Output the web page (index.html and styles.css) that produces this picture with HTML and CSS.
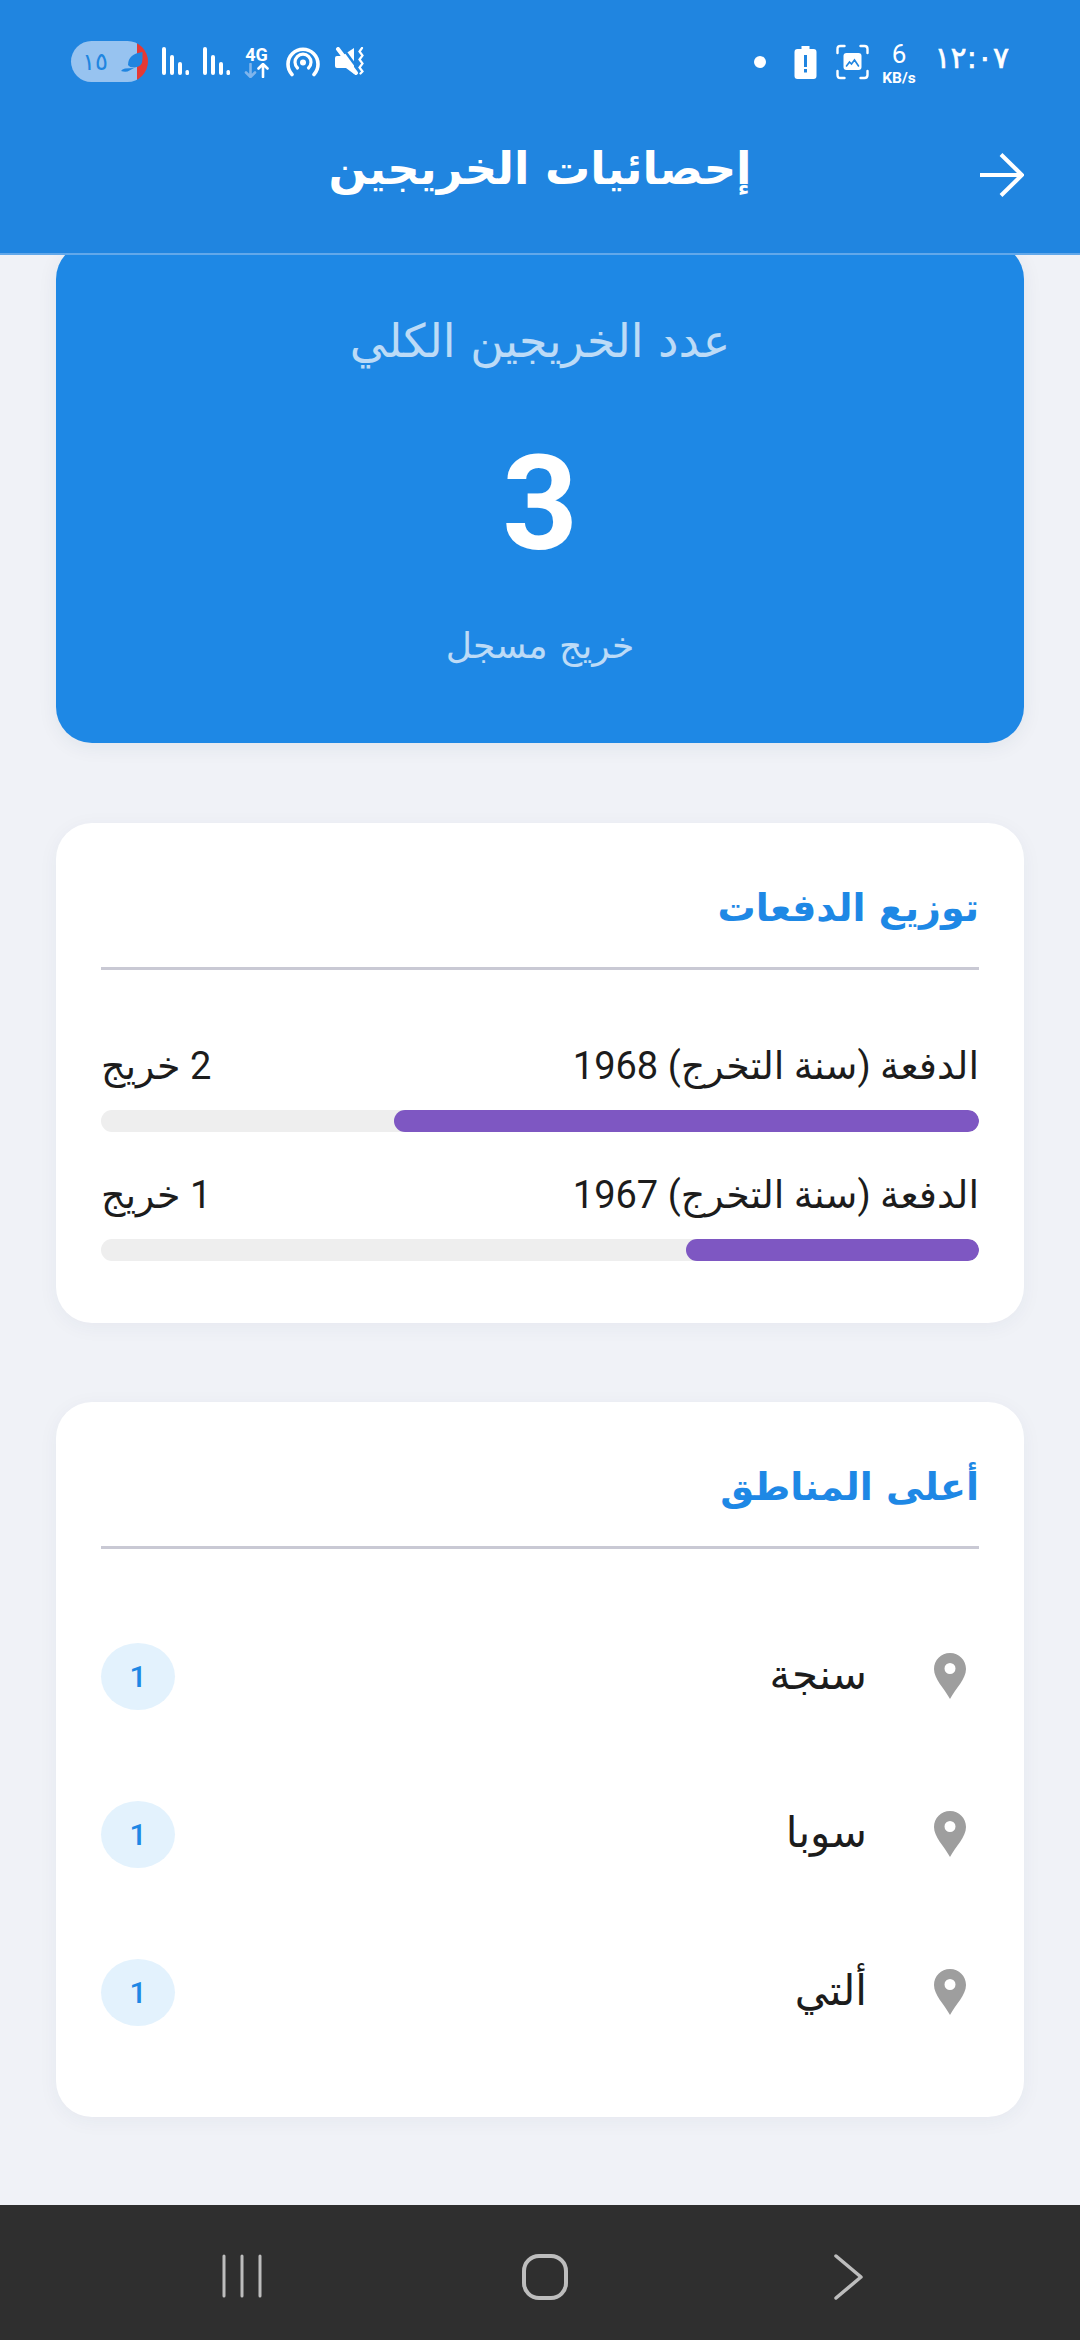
FILE: index.html
```html
<!DOCTYPE html>
<html lang="ar" dir="rtl">
<head>
    <meta charset="UTF-8">
    <meta name="viewport" content="width=device-width, initial-scale=1.0">
    <title>إحصائيات الخريجين</title>
    <link rel="stylesheet" href="styles.css">
</head>
<body>
    <header class="top">
        <div class="status">
            <div class="status-group status-right">
                <span class="clock">١٢:٠٧</span>
                <span class="speed"><b>6</b><i>KB/s</i></span>
                <svg class="ic-shot" viewBox="0 0 34 36" fill="none" stroke="#fff" stroke-width="2.4" stroke-linecap="round">
                    <path d="M2 9V5q0-3 3-3h4M25 2h4q3 0 3 3v4M32 27v4q0 3-3 3h-4M9 34H5q-3 0-3-3v-4"/>
                    <rect x="8" y="9" width="18" height="17" rx="3" fill="#fff" stroke="none"/>
                    <path d="M11 22l3-4 2 2 3-4 4 6" stroke="#2085e0" stroke-width="1.6"/>
                </svg>
                <svg class="ic-batt" viewBox="0 0 22 33">
                    <path fill="#fff" fill-rule="evenodd" d="M7 0h8v3h4q3 0 3 3v24q0 3-3 3H3q-3 0-3-3V6q0-3 3-3h4zM9.500 9v12h3V9zM9.500 23v3.500h3V23z"/>
                </svg>
                <span class="dot"></span>
            </div>
            <div class="status-group status-left">
                <svg class="ic-mute" viewBox="0 0 29 28" fill="none">
                    <path fill="#fff" d="M0 11q0-2 2-2h5L19 1v26l-8-6H2q-2 0-2-2z"/>
                    <path stroke="#2085e0" stroke-width="2.500" d="M7 0l19 26"/>
                    <path stroke="#fff" stroke-width="4" stroke-linecap="round" d="M3 2l18 24"/>
                    <path stroke="#fff" stroke-width="2.200" stroke-linecap="round" d="M27 1l-2.500 3.500 3 4-3 4 3 4-3 4 3 4-2 2"/>
                </svg>
                <svg class="ic-hot" viewBox="0 0 34 30" fill="none" stroke="#fff" stroke-linecap="round">
                    <path stroke-width="3.600" d="M6 27.500a15 15 0 1 1 22 0"/>
                    <path stroke-width="3.200" d="M11.500 21a8 8 0 1 1 11 0"/>
                    <circle cx="17" cy="15.500" r="3" fill="#fff" stroke="none"/>
                </svg>
                <span class="net">
                    <b>4G</b>
                    <svg viewBox="0 0 25 15" fill="none" stroke-width="2.600" stroke-linecap="round">
                        <path stroke="#7fb5ec" d="M6.500 1v13M2 9.500L6.500 14 11 9.500"/>
                        <path stroke="#fff" d="M19 14V1M14.500 5.500L19 1l4.500 4.500"/>
                    </svg>
                </span>
                <svg class="ic-bars" viewBox="0 0 27 28" fill="#fff">
                    <rect x="0" y="0" width="4" height="28" rx="2"/>
                    <rect x="8" y="8" width="4" height="20" rx="2"/>
                    <rect x="16" y="15" width="4" height="13" rx="2"/>
                    <rect x="23.500" y="23" width="3.500" height="5" rx="1.500"/>
                </svg>
                <svg class="ic-bars" viewBox="0 0 27 28" fill="#fff">
                    <rect x="0" y="0" width="4" height="28" rx="2"/>
                    <rect x="8" y="8" width="4" height="20" rx="2"/>
                    <rect x="16" y="15" width="4" height="13" rx="2"/>
                    <rect x="23.500" y="23" width="3.500" height="5" rx="1.500"/>
                </svg>
                <span class="pill">
                    <svg viewBox="0 0 22 20" fill="#2085e0"><path d="M21.500 0v7q0 8-8 8.500-5 0-6.500-2.500Q7 2 21.500 0zM0 19q1-2 4-2.500 4-.5 9-.5-4 2-6.500 3.500Q3 20 0 19z"/></svg>
                    <span>١٥</span>
                </span>
            </div>
        </div>
        <div class="appbar">
            <h1>إحصائيات الخريجين</h1>
            <svg class="back" viewBox="0 0 44 44" fill="none" stroke="#fff" stroke-width="4">
                <path d="M0 22h42M21 1.500L42 22 21 42.500"/>
            </svg>
        </div>
    </header>

    <main class="page">
        <section class="hero">
            <p class="hero-title">عدد الخريجين الكلي</p>
            <p class="hero-num">3</p>
            <p class="hero-sub">خريج مسجل</p>
        </section>

        <section class="card">
            <h2>توزيع الدفعات</h2>
            <div class="batches">
                <div class="batch">
                    <div class="batch-label"><span>الدفعة (سنة التخرج) 1968</span><span>2 خريج</span></div>
                    <div class="track"><div class="fill" style="width: 66.67%"></div></div>
                </div>
                <div class="batch">
                    <div class="batch-label"><span>الدفعة (سنة التخرج) 1967</span><span>1 خريج</span></div>
                    <div class="track"><div class="fill" style="width: 33.33%"></div></div>
                </div>
            </div>
        </section>

        <section class="card">
            <h2>أعلى المناطق</h2>
            <ul class="areas">
                <li>
                    <svg class="pin" viewBox="0 0 32 46"><path fill="#9e9e9e" fill-rule="evenodd" d="M16 0C7 0 0 7 0 16c0 10 10 19 16 30 6-11 16-20 16-30C32 7 25 0 16 0zm0 10a5.500 5.500 0 1 1 0 11 5.500 5.500 0 0 1 0-11z"/></svg>
                    <span class="area-name">سنجة</span>
                    <span class="count">1</span>
                </li>
                <li>
                    <svg class="pin" viewBox="0 0 32 46"><path fill="#9e9e9e" fill-rule="evenodd" d="M16 0C7 0 0 7 0 16c0 10 10 19 16 30 6-11 16-20 16-30C32 7 25 0 16 0zm0 10a5.500 5.500 0 1 1 0 11 5.500 5.500 0 0 1 0-11z"/></svg>
                    <span class="area-name">سوبا</span>
                    <span class="count">1</span>
                </li>
                <li>
                    <svg class="pin" viewBox="0 0 32 46"><path fill="#9e9e9e" fill-rule="evenodd" d="M16 0C7 0 0 7 0 16c0 10 10 19 16 30 6-11 16-20 16-30C32 7 25 0 16 0zm0 10a5.500 5.500 0 1 1 0 11 5.500 5.500 0 0 1 0-11z"/></svg>
                    <span class="area-name">ألتي</span>
                    <span class="count">1</span>
                </li>
            </ul>
        </section>
    </main>

    <nav class="navbar">
        <svg class="nav-recent" viewBox="0 0 40 44" stroke="#bdbdbd" stroke-width="3" stroke-linecap="round"><path d="M2 2v40M20 2v40M38 2v40"/></svg>
        <svg class="nav-home" viewBox="0 0 46 46" fill="none" stroke="#bdbdbd" stroke-width="4"><rect x="2" y="2" width="42" height="42" rx="15"/></svg>
        <svg class="nav-back" viewBox="0 0 30 46" fill="none" stroke="#bdbdbd" stroke-width="3.500" stroke-linecap="round" stroke-linejoin="round"><path d="M2 2l25 21L2 44"/></svg>
    </nav>
</body>
</html>
```

FILE: styles.css
```css
* {
    margin: 0;
    padding: 0;
    box-sizing: border-box;
}
body {
    width: 1080px;
    height: 2340px;
    display: flex;
    flex-direction: column;
    overflow: hidden;
    background-color: #f0f2f7;
    font-family: "DejaVu Sans", sans-serif;
    color: #1c1c1c;
}
svg {
    display: block;
    flex: none;
}

/* header */
.top {
    position: relative;
    z-index: 2;
    height: 255px;
    background-color: #2085e0;
    border-bottom: 2px solid #62a8ea;
}
.status {
    height: 84px;
    padding: 40px 71px 0 71px;
    display: flex;
    justify-content: space-between;
    align-items: flex-start;
}
.status-group {
    display: flex;
    align-items: flex-start;
}
.clock {
    width: 72px;
    margin-left: 19px;
    color: #fff;
    font-size: 30px;
    -webkit-text-stroke: .6px #fff;
    line-height: 36px;
    text-align: center;
}
.speed {
    width: 38px;
    margin-left: 10px;
    margin-top: 2px;
    display: flex;
    flex-direction: column;
    align-items: center;
    color: #fff;
    font-family: Roboto, sans-serif;
}
.speed b {
    font-weight: 400;
    font-size: 26px;
    line-height: 24px;
}
.speed i {
    margin-top: 3px;
    font-style: normal;
    font-weight: 700;
    font-size: 15.5px;
    line-height: 18px;
}
.ic-shot {
    width: 35px;
    height: 36px;
    margin: 4px 0 0 18px;
}
.ic-batt {
    width: 23px;
    height: 33px;
    margin: 6px 0 0 28px;
}
.dot {
    width: 12px;
    height: 12px;
    margin-top: 16px;
    border-radius: 50%;
    background-color: #fff;
}
.ic-mute {
    width: 29px;
    height: 28px;
    margin: 7px 0 0 15px;
}
.ic-hot {
    width: 34px;
    height: 30px;
    margin: 7px 0 0 17px;
}
.net {
    width: 25px;
    margin: 6px 0 0 14px;
    color: #fff;
    font-family: Roboto, sans-serif;
}
.net b {
    display: block;
    font-size: 18px;
    font-weight: 700;
    line-height: 17px;
    text-align: center;
}
.net svg {
    width: 25px;
    height: 15px;
}
.ic-bars {
    width: 27px;
    height: 28px;
    margin: 7px 0 0 14px;
}
.pill {
    width: 77px;
    height: 41px;
    margin-top: 1px;
    padding: 0 5px 0 0;
    border-radius: 21px;
    display: flex;
    align-items: center;
    gap: 13px;
    background: linear-gradient(to left, #e53935 11px, #97c3f0 11px);
    color: #2085e0;
    font-size: 24px;
}
.pill svg {
    width: 22px;
    height: 20px;
}
.appbar {
    height: 169px;
    padding: 0 72px;
    display: flex;
    align-items: center;
    position: relative;
}
.appbar h1 {
    flex: 1;
    text-align: center;
    color: #fff;
    font-size: 45px;
    font-weight: 700;
}
.back {
    position: absolute;
    right: 56px;
    top: 69px;
    width: 44px;
    height: 44px;
}

/* content */
.page {
    flex: 1;
    overflow: hidden;
    padding: 0 56px;
    display: flex;
    flex-direction: column;
    gap: 79px;
}
.hero {
    flex: none;
    height: 500px;
    margin-top: -12px;
    margin-bottom: 1px;
    padding-top: 63px;
    border-radius: 36px;
    background-color: #1e88e5;
    box-shadow: 0 4px 20px rgba(30, 50, 90, .07);
    color: #fff;
    text-align: center;
}
.hero-title {
    font-size: 46px;
    line-height: 70px;
    opacity: .7;
}
.hero-num {
    margin-top: 38px;
    font-family: Roboto, sans-serif;
    font-size: 132px;
    font-weight: 700;
    line-height: 180px;
}
.hero-sub {
    margin-top: 22px;
    font-size: 36px;
    line-height: 60px;
    opacity: .7;
}
.card {
    flex: none;
    padding: 45px 45px 62px;
    border-radius: 36px;
    background-color: #fff;
    box-shadow: 0 4px 20px rgba(30, 50, 90, .05);
}
.card h2 {
    height: 102px;
    padding-bottom: 19px;
    border-bottom: 3px solid #c9c9d4;
    color: #1e88e5;
    font-size: 38px;
    font-weight: 700;
    line-height: 80px;
}
.batches {
    margin-top: 71px;
    display: flex;
    flex-direction: column;
    gap: 38px;
}
.batch-label {
    display: flex;
    justify-content: space-between;
    margin-bottom: 19px;
    font-family: Roboto, "DejaVu Sans", sans-serif;
    font-size: 38px;
    line-height: 50px;
}
.track {
    height: 22px;
    border-radius: 11px;
    background-color: #eeeeee;
    overflow: hidden;
}
.fill {
    height: 100%;
    border-radius: 11px;
    background-color: #7e57c2;
}
.areas {
    margin-top: 48px;
    margin-bottom: -16px;
    list-style: none;
}
.areas li {
    height: 158px;
    padding-right: 13px;
    display: flex;
    align-items: center;
}
.pin {
    width: 32px;
    height: 46px;
}
.area-name {
    margin-right: 67px;
    padding-bottom: 4px;
    font-size: 42px;
}
.count {
    width: 74px;
    height: 67px;
    margin-right: auto;
    border-radius: 50%;
    background-color: #e3f2fd;
    color: #1e88e5;
    font-family: Roboto, sans-serif;
    font-size: 30px;
    font-weight: 500;
    line-height: 67px;
    text-align: center;
}

/* android buttons */
.navbar {
    height: 135px;
    flex: none;
    position: relative;
    background-color: #2f2f2f;
}
.navbar svg {
    position: absolute;
    top: 49px;
}
.nav-recent {
    left: 222px;
    width: 40px;
    height: 44px;
}
.nav-home {
    left: 522px;
    width: 46px;
    height: 46px;
}
.nav-back {
    left: 834px;
    width: 30px;
    height: 46px;
}
```
